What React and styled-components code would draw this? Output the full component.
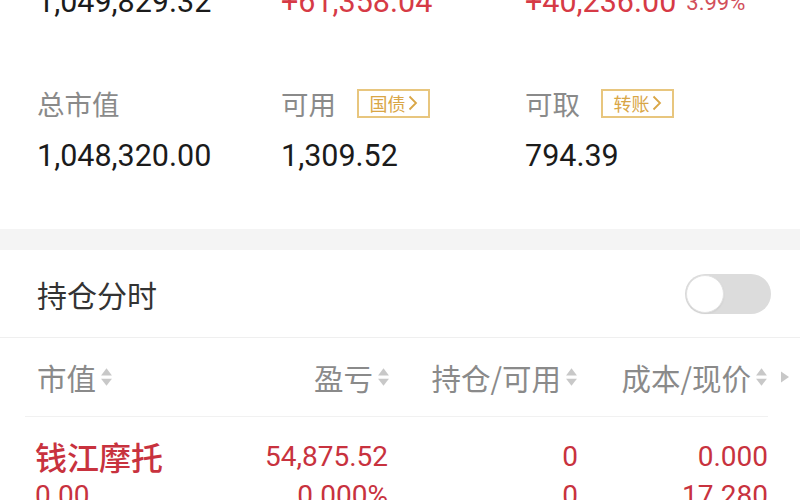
import React from "react";
import styled, { createGlobalStyle } from "styled-components";

const Global = createGlobalStyle`
  html, body { margin: 0; padding: 0; background: #fff; }
  body {
    width: 800px; height: 500px; overflow: hidden;
    font-family: "Noto Sans CJK SC", "Noto Sans", sans-serif;
  }
`;

const Page = styled.div`
  width: 800px;
  background: #fff;
`;

const Summary = styled.section`
  padding: 0 31px 56px 37px;
`;

const Grid3 = styled.div`
  display: grid;
  grid-template-columns: 244px 244px 244px;
  align-items: center;
  height: ${(p) => p.$h}px;
  margin-top: ${(p) => p.$mt}px;
`;

const Num = styled.span`
  font-family: Roboto, "Liberation Sans", sans-serif;
  font-size: ${(p) => p.$size || 30.5}px;
  line-height: 1;
  color: ${(p) => (p.$red ? "#d63a46" : "#1b1b1b")};
  white-space: nowrap;
`;

const Pct = styled.span`
  font-family: Roboto, "Liberation Sans", sans-serif;
  font-size: 22px;
  color: #d24f5a;
  margin-left: 10px;
`;

const Cell = styled.div`
  display: flex;
  align-items: center;
`;

const Label = styled.span`
  font-size: 27.5px;
  line-height: 30px;
  color: #8a8a8a;
`;

const Tag = styled.span`
  margin-left: 21px;
  box-sizing: border-box;
  height: 29px;
  width: 73px;
  border: 2px solid #e8c67e;
  color: #d9a646;
  font-size: 18px;
  display: inline-flex;
  align-items: center;
  justify-content: center;
  gap: 2px;
`;

const Band = styled.div`
  height: 21px;
  background: #f4f4f4;
`;

const ToggleRow = styled.div`
  height: 87px;
  display: flex;
  align-items: center;
  justify-content: space-between;
  padding: 0 29px 0 37px;
  border-bottom: 1px solid #efefef;
`;

const Title = styled.span`
  font-size: 30px;
  color: #333;
`;

const Toggle = styled.div`
  position: relative;
  width: 86px;
  height: 40px;
  border-radius: 20px;
  background: #dcdcdc;
`;

const Knob = styled.div`
  position: absolute;
  left: 1px;
  top: 1px;
  width: 38px;
  height: 38px;
  box-sizing: border-box;
  border-radius: 50%;
  background: #fff;
  border: 1px solid #e2e2e2;
  box-shadow: 0 1px 2px rgba(0,0,0,0.06);
`;

const HeaderRow = styled.div`
  display: grid;
  grid-template-columns: 150px 203px 188px 190px 0;
  align-items: center;
  height: 78px;
  margin: 0 32px 0 25px;
  padding-left: 12px;
  border-bottom: 1.5px solid #f1f1f1;
`;

const Head = styled.div`
  display: flex;
  align-items: center;
  justify-content: ${(p) => (p.$left ? "flex-start" : "flex-end")};
  font-size: 29.5px;
  color: #8a8a8a;
  white-space: nowrap;
`;

const MoreArrow = styled.svg`
  margin-left: 12px;
  display: block;
`;

const DataRow = styled.div`
  display: grid;
  grid-template-columns: 150px 203px 190px 190px;
  grid-auto-rows: 39px;
  align-items: center;
  padding: 20px 0 0 35px;
`;

const DCell = styled.div`
  text-align: ${(p) => (p.$left ? "left" : "right")};
  color: #c8323e;
  white-space: nowrap;
  font-family: ${(p) =>
    p.$cjk
      ? `"Noto Sans CJK SC", sans-serif`
      : `Roboto, "Liberation Sans", sans-serif`};
  font-size: ${(p) => (p.$cjk ? 32 : 28)}px;
  font-weight: ${(p) => (p.$cjk ? 500 : 400)};
  line-height: 39px;
`;

const SortIcon = () => (
  <svg width="13" height="22" viewBox="0 0 12 20" style={{ marginLeft: 4 }}>
    <path d="M6 2 L11 8.5 L1 8.5 Z" fill="#c8c8c8" />
    <path d="M6 18 L11 11.5 L1 11.5 Z" fill="#c8c8c8" />
  </svg>
);

const Chevron = () => (
  <svg width="10" height="16" viewBox="0 0 10 16">
    <path d="M1.5 1.5 L8 8 L1.5 14.5" fill="none" stroke="#d9a646" strokeWidth="1.8" />
  </svg>
);

export default function App() {
  return (
    <Page>
      <Global />
      <Summary>
        <Grid3 $h={30} $mt={-13}>
          <Cell><Num>1,049,829.32</Num></Cell>
          <Cell><Num $red>+61,358.04</Num></Cell>
          <Cell><Num $red>+40,236.00</Num><Pct>3.99%</Pct></Cell>
        </Grid3>
        <Grid3 $h={30} $mt={71}>
          <Cell><Label>总市值</Label></Cell>
          <Cell><Label>可用</Label><Tag>国债<Chevron /></Tag></Cell>
          <Cell><Label>可取</Label><Tag>转账<Chevron /></Tag></Cell>
        </Grid3>
        <Grid3 $h={34} $mt={21}>
          <Cell><Num>1,048,320.00</Num></Cell>
          <Cell><Num>1,309.52</Num></Cell>
          <Cell><Num>794.39</Num></Cell>
        </Grid3>
      </Summary>
      <Band />
      <ToggleRow>
        <Title>持仓分时</Title>
        <Toggle><Knob /></Toggle>
      </ToggleRow>
      <HeaderRow>
        <Head $left>市值<SortIcon /></Head>
        <Head>盈亏<SortIcon /></Head>
        <Head>持仓/可用<SortIcon /></Head>
        <Head>成本/现价<SortIcon /></Head>
        <div>
          <MoreArrow width="10" height="12" viewBox="0 0 10 12">
            <path d="M1 0.5 L9 6 L1 11.5 Z" fill="#c8c8c8" />
          </MoreArrow>
        </div>
      </HeaderRow>
      <DataRow>
        <DCell $left $cjk>钱江摩托</DCell>
        <DCell>54,875.52</DCell>
        <DCell>0</DCell>
        <DCell>0.000</DCell>
        <DCell $left>0.00</DCell>
        <DCell>0.000%</DCell>
        <DCell>0</DCell>
        <DCell>17.280</DCell>
      </DataRow>
    </Page>
  );
}
